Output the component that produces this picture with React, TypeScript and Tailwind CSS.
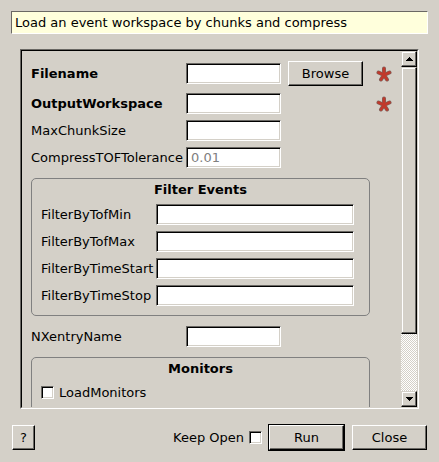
import React from "react";

const sunken =
  "border border-t-[#6a6864] border-l-[#6a6864] border-b-white border-r-white bg-white shadow-[inset_1px_1px_0_#000,inset_-1px_-1px_0_#d4d0c8]";
const raised =
  "border border-t-white border-l-white border-b-black border-r-black bg-[#d4d0c8] shadow-[inset_-1px_-1px_0_#6a6864]";
const scrollPart =
  "border border-t-[#d4d0c8] border-l-[#d4d0c8] border-b-black border-r-black bg-[#d4d0c8] shadow-[inset_-1px_-1px_0_#6a6864,inset_1px_1px_0_#fff]";

function TextField({ id, label, width, labelWidth, bold, placeholder, children }: {
  id: string;
  label: string;
  width: string;
  labelWidth: string;
  bold?: boolean;
  placeholder?: string;
  children?: React.ReactNode;
}) {
  return (
    <div className="flex items-center">
      <label htmlFor={id} className={`${labelWidth} shrink-0 whitespace-nowrap ${bold ? "font-bold" : ""}`}>
        {label}
      </label>
      <input
        id={id}
        type="text"
        placeholder={placeholder}
        className={`${width} ${sunken} h-[21px] min-w-0 px-1 outline-none placeholder:text-[#808080]`}
      />
      {children}
    </div>
  );
}

function CheckBox({ id }: { id: string }) {
  return (
    <input
      id={id}
      type="checkbox"
      className={`${sunken} h-[13px] w-[13px] shrink-0 appearance-none checked:bg-[radial-gradient(#000_40%,#fff_45%)]`}
    />
  );
}

function Required() {
  const arms = "M8 9V2.500M8 9L2.500 6.500M8 9L13.500 6.500M8 9L5 13.500M8 9L11 13.500";
  return (
    <svg width="16" height="16" viewBox="0 0 16 16" role="img" aria-label="Required" className="ml-auto mr-[9px] shrink-0">
      <path d={arms} stroke="#80605a" strokeWidth="4" strokeLinecap="round" />
      <path d={arms} stroke="#c0392b" strokeWidth="2.600" strokeLinecap="round" />
    </svg>
  );
}

function Group({ title, children }: { title: string; children: React.ReactNode }) {
  return (
    <section className="mr-[31px] rounded-[5px] border border-[#808080] px-[9px] pb-[9px]">
      <h2 className="mb-1 mt-[3px] h-[18px] text-center font-bold leading-[16px]">{title}</h2>
      {children}
    </section>
  );
}

function ScrollBar() {
  return (
    <div className="flex w-4 shrink-0 flex-col bg-[conic-gradient(#fff_25%,#d4d0c8_0_50%,#fff_0_75%,#d4d0c8_0)] bg-[length:2px_2px]">
      <button aria-label="Scroll up" className={`${scrollPart} flex h-4 items-center justify-center`}>
        <svg width="7" height="4" viewBox="0 0 7 4" shapeRendering="crispEdges">
          <path d="M3 0h1v1h1v1h1v1h1v1H0V3h1V2h1V1h1z" />
        </svg>
      </button>
      <div className="min-h-0 flex-1">
        <div className={`${scrollPart} h-[82.4%]`} />
      </div>
      <button aria-label="Scroll down" className={`${scrollPart} flex h-4 items-center justify-center`}>
        <svg width="7" height="4" viewBox="0 0 7 4" shapeRendering="crispEdges">
          <path d="M0 0h7v1H6v1H5v1H4v1H3V3H2V2H1V1H0z" />
        </svg>
      </button>
    </div>
  );
}

export default function App() {
  return (
    <main className="flex h-screen flex-col bg-[#d4d0c8] p-[11px] font-['DejaVu_Sans',sans-serif] text-[13px] leading-[17px] text-black">
      <p className="h-[23px] shrink-0 border border-b-white border-l-[#6a6864] border-r-white border-t-[#6a6864] bg-[#ffffdc] px-[3px] py-[2px]">
        Load an event workspace by chunks and compress
      </p>

      <div className="mx-[9px] my-[15px] flex min-h-0 flex-1 border border-b-white border-l-[#6a6864] border-r-white border-t-[#6a6864]">
        <div className="flex min-w-0 flex-1 border border-b-[#d4d0c8] border-l-black border-r-[#d4d0c8] border-t-black">
          <form className="flex min-w-0 flex-1 flex-col overflow-hidden pl-[9px] pt-[10px]">
            <div className="flex shrink-0 flex-col">
              <TextField id="filename" label="Filename" bold width="w-[95px]" labelWidth="w-[155px]">
                <button type="button" className={`${raised} ml-[7px] h-[25px] w-[75px]`}>Browse</button>
                <Required />
              </TextField>
              <div className="mt-[7px] flex flex-col gap-[6px]">
                <TextField id="output" label="OutputWorkspace" bold width="w-[95px]" labelWidth="w-[155px]">
                  <Required />
                </TextField>
                <TextField id="chunk" label="MaxChunkSize" width="w-[95px]" labelWidth="w-[155px]" />
                <TextField id="tolerance" label="CompressTOFTolerance" placeholder="0.01" width="w-[95px]" labelWidth="w-[155px]" />
              </div>
              <div className="mt-[10px] flex flex-col gap-[10px]">
                <Group title="Filter Events">
                  <div className="mr-[6px] flex flex-col gap-[6px]">
                    <TextField id="tofmin" label="FilterByTofMin" width="flex-1" labelWidth="w-[115px]" />
                    <TextField id="tofmax" label="FilterByTofMax" width="flex-1" labelWidth="w-[115px]" />
                    <TextField id="start" label="FilterByTimeStart" width="flex-1" labelWidth="w-[115px]" />
                    <TextField id="stop" label="FilterByTimeStop" width="flex-1" labelWidth="w-[115px]" />
                  </div>
                </Group>
                <TextField id="nxentry" label="NXentryName" width="w-[95px]" labelWidth="w-[155px]" />
                <Group title="Monitors">
                  <div className="flex h-[19px] items-center gap-[5px]">
                    <CheckBox id="monitors" />
                    <label htmlFor="monitors">LoadMonitors</label>
                  </div>
                </Group>
              </div>
            </div>
          </form>
          <ScrollBar />
        </div>
      </div>

      <footer className="flex shrink-0 items-center px-px">
        <button className={`${raised} h-[25px] w-[23px]`}>?</button>
        <div className="ml-auto flex items-center gap-[5px]">
          <label htmlFor="keep">Keep Open</label>
          <CheckBox id="keep" />
        </div>
        <div className="ml-[6px] border border-black">
          <button className={`${raised} block h-[25px] w-[75px]`}>Run</button>
        </div>
        <button className={`${raised} ml-[7px] h-[25px] w-[75px]`}>Close</button>
      </footer>
    </main>
  );
}
